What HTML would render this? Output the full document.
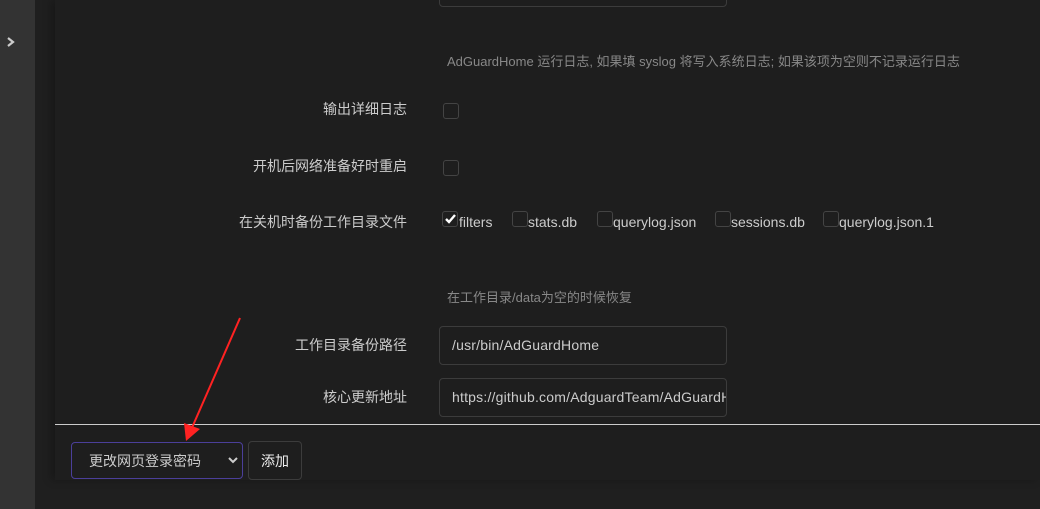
<!DOCTYPE html>
<html><head><meta charset="utf-8"><style>
*{margin:0;padding:0;box-sizing:border-box}
body{width:1040px;height:509px;overflow:hidden;background:#1f1f1f;font-family:"Liberation Sans","Noto Sans CJK SC",sans-serif;position:relative;color:#ccc}
.side{position:absolute;left:0;top:0;width:35px;height:509px;background:#333}
.panel{position:absolute;left:55px;top:0;width:985px;height:480px;background:#1e1e1e;box-shadow:-4px 0 8px rgba(0,0,0,.25)}
.a{position:absolute}
.lbl{position:absolute;right:633px;font-size:14px;color:#ccc;white-space:nowrap}
.cb{position:absolute;width:16px;height:16px;border:1px solid #444;border-radius:3px;background:#1e1e1e}
.t{position:absolute;font-size:14px;color:#ccc}
.inp{position:absolute;left:439px;width:288px;height:39px;border:1px solid #3c3c3c;border-radius:4px;font-size:14px;color:#ccc;padding:10px 12px;white-space:nowrap;overflow:hidden;letter-spacing:0.2px}
.hint{position:absolute;left:447px;font-size:13px;color:#888}
</style></head><body>
<div class="side"></div>
<svg class="a" style="left:6px;top:36px" width="10" height="12" viewBox="0 0 10 12"><path d="M2 2 L7 6 L2 10" stroke="#ccc" stroke-width="2.2" fill="none"/></svg>
<div class="panel"></div>
<div class="inp" style="top:-32px"></div>
<div class="hint" style="top:51px">AdGuardHome 运行日志, 如果填 syslog 将写入系统日志; 如果该项为空则不记录运行日志</div>
<div class="lbl" style="top:99px">输出详细日志</div>
<div class="cb" style="left:443px;top:103px"></div>
<div class="lbl" style="top:156px">开机后网络准备好时重启</div>
<div class="cb" style="left:443px;top:160px"></div>
<div class="lbl" style="top:212px">在关机时备份工作目录文件</div>
<div class="cb" style="left:442px;top:211px"></div>
<svg class="a" style="left:444px;top:213px" width="13" height="12" viewBox="0 0 13 12"><path d="M2 6 L5 9 L11 2" stroke="#fff" stroke-width="2.4" fill="none"/></svg>
<div class="t" style="left:459px;top:214px">filters</div>
<div class="cb" style="left:512px;top:211px"></div>
<div class="t" style="left:528px;top:214px">stats.db</div>
<div class="cb" style="left:597px;top:211px"></div>
<div class="t" style="left:613px;top:214px">querylog.json</div>
<div class="cb" style="left:715px;top:211px"></div>
<div class="t" style="left:731px;top:214px">sessions.db</div>
<div class="cb" style="left:823px;top:211px"></div>
<div class="t" style="left:839px;top:214px">querylog.json.1</div>
<div class="hint" style="top:287px">在工作目录/data为空的时候恢复</div>
<div class="lbl" style="top:335px">工作目录备份路径</div>
<div class="inp" style="top:326px">/usr/bin/AdGuardHome</div>
<div class="lbl" style="top:387px">核心更新地址</div>
<div class="inp" style="top:378px">https://github.com/AdguardTeam/AdGuardHome</div>
<div class="a" style="left:55px;top:424px;width:985px;height:1px;background:#ccc"></div>
<div class="a" style="left:71px;top:442px;width:172px;height:37px;border:1px solid #4b3f9a;border-radius:4px;font-size:14px;color:#ccc;padding:8px 0 0 17px">更改网页登录密码</div>
<svg class="a" style="left:228px;top:456px" width="10" height="8" viewBox="0 0 10 8"><path d="M1 2 L5 6 L9 2" stroke="#ccc" stroke-width="2" fill="none"/></svg>
<div class="a" style="left:248px;top:441px;width:54px;height:39px;border:1px solid #3c3c3c;border-radius:4px;font-size:14px;color:#eee;padding:9px 0 0 12px">添加</div>
<svg class="a" style="left:0;top:0" width="1040" height="509"><path d="M240 318 L191 430" stroke="#f22" stroke-width="2" fill="none"/><path d="M186 441 L184 423 L200 429 Z" fill="#f22"/></svg>
</body></html>
